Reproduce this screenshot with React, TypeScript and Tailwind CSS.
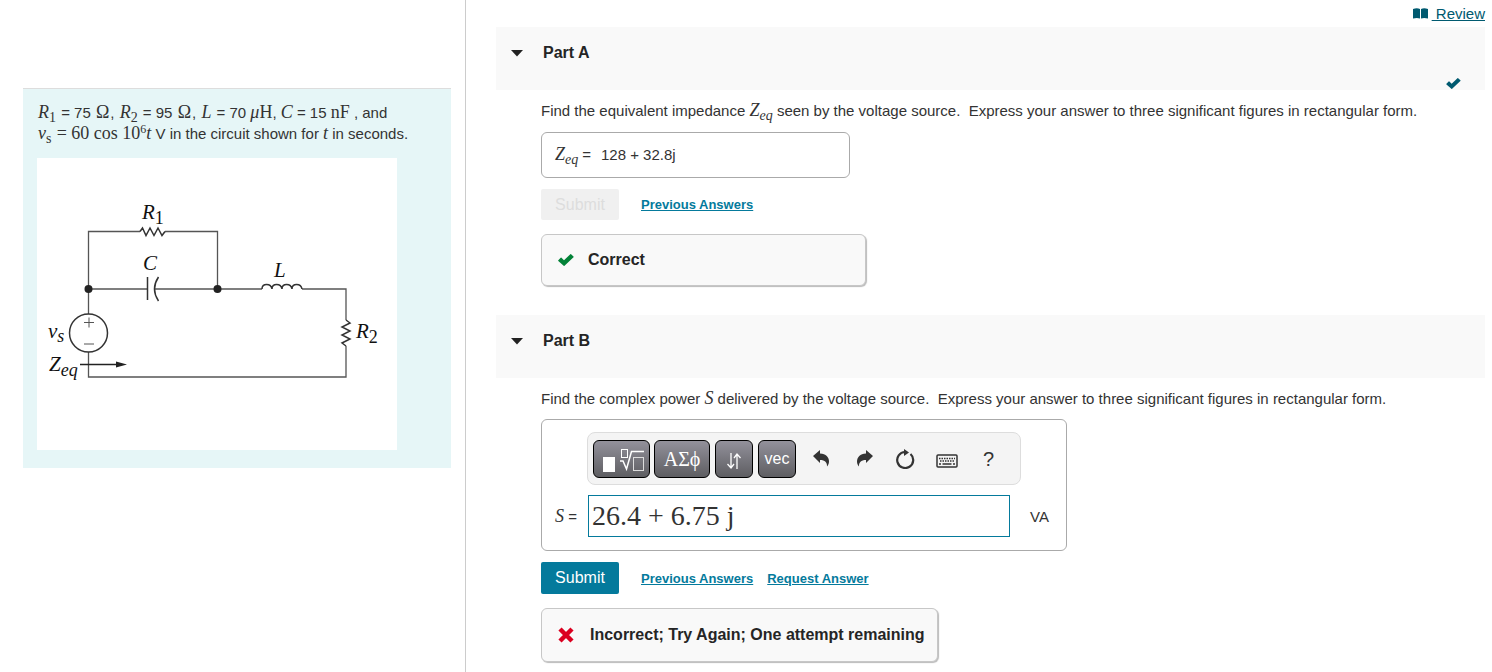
import React from 'react';

const MATH_FONT = "font-['Liberation_Serif',serif]";

interface MathProps {
  children: React.ReactNode;
  sub?: string;
  subUpright?: boolean;
  upright?: boolean;
  spaced?: boolean;
}

// Inline formula symbol with an optional subscript
const MathText: React.FC<MathProps> = ({ children, sub, subUpright, upright, spaced }) => (
  <span className={`${MATH_FONT} text-lg leading-none whitespace-nowrap ${upright ? '' : 'italic'} ${spaced ? 'mx-px' : ''}`}>
    {children}
    {sub && <sub className={`text-sm leading-none bottom-[-4px] ${subUpright ? 'not-italic' : ''}`}>{sub}</sub>}
  </span>
);

const CheckIcon: React.FC<{ className?: string }> = ({ className }) => (
  <svg viewBox="0 0 16 12" className={className} fill="currentColor" aria-hidden="true">
    <path d="M.3 6.200L2.700 3.800q.4-.4.8 0L6 6.300 12.300.3q.4-.4.8 0l2.400 2.200q.4.400 0 .8L6.500 11.700q-.4.400-.8 0L.3 7q-.4-.4 0-.8z" />
  </svg>
);

const CrossIcon: React.FC<{ className?: string }> = ({ className }) => (
  <svg viewBox="0 0 16 16" className={className} fill="none" stroke="currentColor" strokeWidth="4.500" aria-hidden="true">
    <path d="M2 2l12 12M14 2L2 14" />
  </svg>
);

const Circuit: React.FC = () => (
  <svg
    viewBox="37 158 360 292"
    className="block w-[360px] h-[292px] bg-white"
    role="img"
    aria-label="Circuit with a voltage source, R1 in parallel with C, then L and R2 in series"
  >
    <g fill="none" stroke="#555" strokeWidth="1.3">
      <path d="M88.500 314V231.500H140M165 231.500H217.500V289" />
      <path d="M88.500 289H147M155 289H262M302 289H346V320M346 346V377H88.500V352" />
      <g stroke="#333" strokeWidth="1.500">
        <path d="M262 289c0-6 9-6 10 0c0-6 9-6 10 0c0-6 9-6 10 0c0-6 9-6 10 0" />
        <path d="M140 231.500l2.500-3.500 3.500 7.500 4-7.500 4 7.500 4-7.500 4 7.500 3-4" />
        <path d="M346 320l4 3-8 4 8 4-8 4 8 4-8 4 4 3" />
        <path d="M147.500 277V300M158.500 277q-8 12 0 24" />
        <circle cx="88.500" cy="333" r="19" />
      </g>
      <path d="M84 322.500h10M89 317.500v10M84 344h10" strokeWidth="1" />
      <path d="M80 364.500h38" stroke="#222" />
    </g>
    <g fill="#222">
      <path d="M116 361.500l11 3-11 3z" />
      <circle cx="88.500" cy="289" r="4" />
      <circle cx="217.500" cy="289" r="4" />
    </g>
    <g fill="#111" fontFamily="Liberation Serif, serif" fontSize="21" fontStyle="italic">
      <text x="142" y="219">R<tspan dy="5" fontSize="18" fontStyle="normal">1</tspan></text>
      <text x="143" y="270">C</text>
      <text x="274" y="277">L</text>
      <text x="356" y="338">R<tspan dy="5" fontSize="18" fontStyle="normal">2</tspan></text>
      <text x="48" y="338">v<tspan dy="4" fontSize="18">s</tspan></text>
      <text x="49" y="371">Z<tspan dy="5" fontSize="18">eq</tspan></text>
    </g>
  </svg>
);

const PartHeader: React.FC<{ title: string; done?: boolean }> = ({ title, done }) => (
  <header className="relative h-[63px] bg-[#f9f9f9] px-[15px] pt-[13px]">
    <h2>
      <button type="button" className="flex items-center gap-5 font-bold text-base leading-[26px] text-[#252525]">
        <svg width="12" height="7" viewBox="0 0 12 7" aria-hidden="true">
          <path d="M0 0h12L6 6.500z" fill="#222" />
        </svg>
        {title}
      </button>
    </h2>
    {done && <CheckIcon className="absolute right-6 bottom-px w-[15px] h-[11px] text-[#005a70]" />}
  </header>
);

const linkStyle = 'text-[13px] font-bold underline text-[#047a9c]';

const toolButton =
  'h-[38px] flex items-center justify-center rounded-[6px] border border-black bg-linear-to-b from-[#93919b] to-[#5e5e62] text-white';

const Toolbar: React.FC = () => (
  <div className="flex items-center h-[53px] w-[434px] rounded-lg border border-[#ddd] bg-[#f4f4f4] px-[5px] text-[#333]">
    <button type="button" aria-label="Templates" className={`${toolButton} w-[57px]`}>
      <svg width="45" height="28" viewBox="0 0 45 28" aria-hidden="true">
        <rect x="4" y="12" width="12" height="15" fill="#fff" />
        <g fill="none" stroke="#fff">
          <rect x="22.500" y="4.500" width="6" height="8" />
          <path d="M21 16h3l3.500 8L32.500 6.500H45" strokeWidth="1.500" />
          <rect x="34.500" y="12.500" width="10" height="13" stroke="#ddd" />
        </g>
      </svg>
    </button>
    <button type="button" aria-label="Symbols" className={`${toolButton} ml-1 w-[56px] ${MATH_FONT} text-xl`}>
      ΑΣϕ
    </button>
    <button type="button" aria-label="Arrows" className={`${toolButton} ml-[5px] w-[38px]`}>
      <svg width="14" height="18" viewBox="0 0 14 18" fill="none" stroke="#fff" strokeWidth="1.300" className="mt-1" aria-hidden="true">
        <path d="M4 1v15M.5 12L4 16l3-4M10 17V2M7 6l3-4 3.500 4" />
      </svg>
    </button>
    <button type="button" aria-label="Vector" className={`${toolButton} ml-[5px] w-[38px] text-base`}>
      vec
    </button>
    <button type="button" aria-label="Undo" className="ml-4 p-px">
      <svg width="16" height="17" viewBox="0 0 16 17" aria-hidden="true">
        <path d="M0 6L7 0v3.500c6 0 9 4 9 8 0 2-.8 3.800-2 5 .3-4-2-6.500-7-6.500V13z" fill="#333" />
      </svg>
    </button>
    <button type="button" aria-label="Redo" className="ml-[26px] p-px">
      <svg width="16" height="17" viewBox="0 0 16 17" aria-hidden="true">
        <path d="M16 6L9 0v3.500c-6 0-9 4-9 8 0 2 .8 3.800 2 5-.3-4 2-6.500 7-6.500V13z" fill="#333" />
      </svg>
    </button>
    <button type="button" aria-label="Reset" className="ml-5 p-px">
      <svg width="20" height="20" viewBox="0 0 20 20" aria-hidden="true">
        <path d="M15.500 5A8 8 0 1 1 10 3" fill="none" stroke="#333" strokeWidth="2.200" />
        <path d="M9 0l5 3.500-5 3.500z" fill="#333" />
      </svg>
    </button>
    <button type="button" aria-label="Keyboard" className="ml-5 pt-1">
      <svg width="22" height="14" viewBox="0 0 22 14" aria-hidden="true">
        <rect x="1" y="1" width="20" height="12" rx="1" fill="none" stroke="#333" strokeWidth="1.500" />
        <path d="M3 4.500h16M4 7h15" stroke="#333" strokeWidth="1.500" strokeDasharray="1.500 1" />
        <path d="M3 10h2M6.500 10h9M17 10h2" stroke="#333" strokeWidth="1.500" />
      </svg>
    </button>
    <button type="button" aria-label="Help" className="ml-[25px] text-xl leading-none">?</button>
  </div>
);

export default function App() {
  return (
    <div className="flex min-h-screen bg-white font-['Liberation_Sans',Arial,sans-serif] text-[15px] leading-[21px] text-[#333]">
      <aside className="w-[466px] shrink-0 border-r border-[#ccc] pt-[88px] pl-[23px] pr-[14px]">
        <div className="bg-[#e6f6f7] border-t border-[#ddd] pt-[13px] pb-[18px] px-[14px]">
          <p className="mb-[14px]">
            <MathText sub="1" subUpright spaced>R</MathText> = 75 <MathText upright spaced>Ω</MathText>,{' '}
            <MathText sub="2" subUpright spaced>R</MathText> = 95 <MathText upright spaced>Ω</MathText>,{' '}
            <MathText spaced>L</MathText> = 70 <MathText>μ<span className="not-italic">H</span></MathText>,{' '}
            <MathText>C</MathText> = 15 <MathText upright>nF</MathText> , and
            <br />
            <MathText sub="s" subUpright spaced>v</MathText>{' '}
            <MathText upright>= 60 cos 10<sup className="text-xs leading-none">6</sup><i>t</i></MathText>{' '}
            V in the circuit shown for <MathText>t</MathText> in seconds.
          </p>
          <Circuit />
        </div>
      </aside>

      <main className="flex-1 min-w-0 pl-[30px] pr-[7px]">
        <nav className="flex h-[27px] items-center justify-end gap-1">
          <svg width="15" height="11" viewBox="0 0 15 11" fill="#005a70" aria-hidden="true">
            <path d="M0 1q4-1.500 7 0v9.500q-3-1-7 0zM8 1q3-1.500 7 0v9.500q-4-1-7 0z" />
          </svg>
          <a href="#review" className="underline whitespace-pre text-[#005a70]"> Review</a>
        </nav>

        <section>
          <PartHeader title="Part A" done />
          <div className="pl-[45px] pt-[10px] pb-[29px]">
            <p>
              Find the equivalent impedance <MathText sub="eq">Z</MathText> seen by the voltage source.&nbsp; Express
              your answer to three significant figures in rectangular form.
            </p>
            <div className="mt-[11px] flex h-[46px] w-[309px] max-w-full items-center rounded-[6px] border border-[#aaa] px-[13px] pb-0.5">
              <MathText sub="eq">Z</MathText>
              <span className="ml-1">=</span>
              <span className="ml-2.5">128 + 32.8j</span>
            </div>
            <div className="mt-[11px] flex items-center">
              <button type="button" disabled className="h-[31px] w-[78px] rounded-xs bg-[#f0f0f0] text-base text-[#ddd]">
                Submit
              </button>
              <a href="#previous-a" className={`ml-[22px] ${linkStyle}`}>Previous Answers</a>
            </div>
            <div className="mt-[14px] flex h-[52px] w-[325px] max-w-full items-center rounded-[6px] border border-[#c7c7c7] bg-[#f9f9f9] px-4 shadow-[1px_1px_1px_#bbb]">
              <CheckIcon className="w-4 h-3 text-[#038238]" />
              <strong className="ml-[14px] text-base text-[#252525]">Correct</strong>
            </div>
          </div>
        </section>

        <section>
          <PartHeader title="Part B" />
          <div className="pl-[45px] pt-[10px]">
            <p>
              Find the complex power <MathText>S</MathText> delivered by the voltage source.&nbsp; Express your answer
              to three significant figures in rectangular form.
            </p>
            <div className="mt-[10px] w-[526px] max-w-full rounded-[6px] border border-[#aaa] px-[13px] pt-3 pb-[13px]">
              <div className="pl-8">
                <Toolbar />
              </div>
              <div className="mt-[10px] flex items-center">
                <label htmlFor="answer-s" className="w-[33px]">
                  <MathText>S</MathText> =
                </label>
                <input
                  id="answer-s"
                  type="text"
                  defaultValue="26.4 + 6.75 j"
                  className={`h-[42px] w-[422px] border border-[#047a9c] px-[3px] ${MATH_FONT} text-[28px] text-[#333]`}
                />
                <span className="ml-5">VA</span>
              </div>
            </div>
            <div className="mt-[11px] flex items-center">
              <button type="button" className="h-8 w-[78px] rounded-xs bg-[#047a9c] text-base text-white">
                Submit
              </button>
              <a href="#previous-b" className={`ml-[22px] ${linkStyle}`}>Previous Answers</a>
              <a href="#request-b" className={`ml-[14px] ${linkStyle}`}>Request Answer</a>
            </div>
            <div className="mt-[14px] flex h-[54px] w-fit items-center rounded-[6px] border border-[#c7c7c7] bg-[#f9f9f9] pl-4 pr-3 shadow-[1px_1px_1px_#bbb]">
              <CrossIcon className="w-4 h-4 text-[#db0020]" />
              <strong className="ml-4 text-base text-[#252525]">Incorrect; Try Again; One attempt remaining</strong>
            </div>
          </div>
        </section>
      </main>
    </div>
  );
}
